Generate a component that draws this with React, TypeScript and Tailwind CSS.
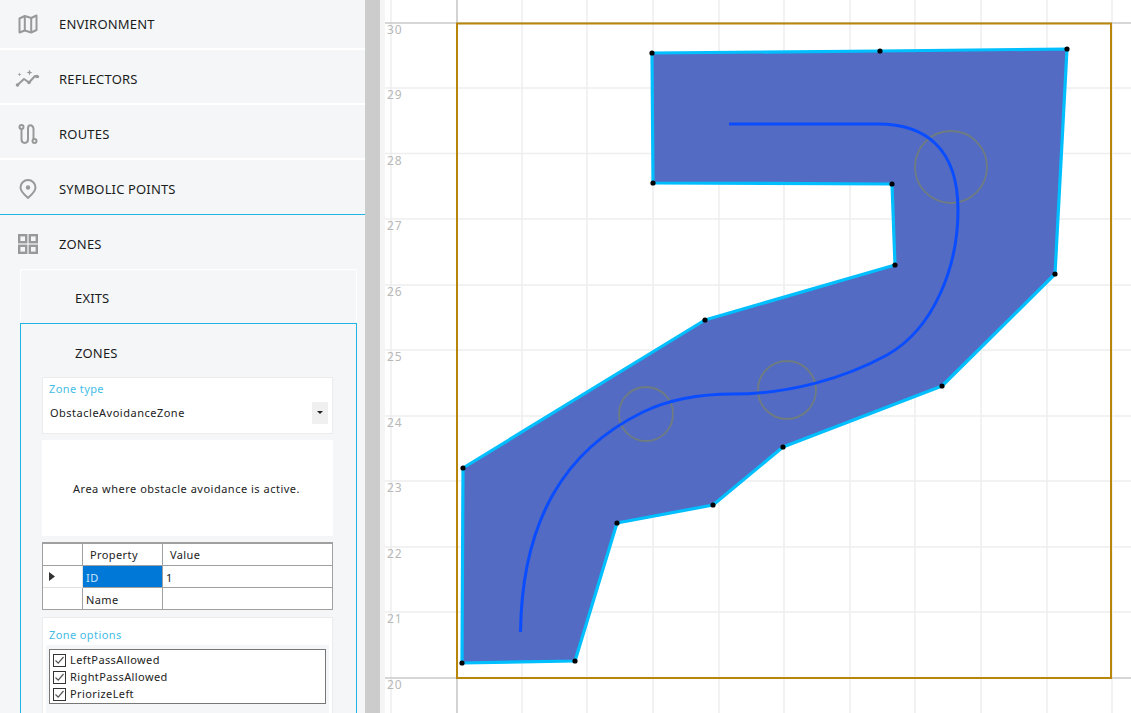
const F = "font-['Noto_Sans','Open_Sans',sans-serif]";

function MapIcon() {
  return (
    <svg width="20" height="20" viewBox="0 0 20 20" fill="none" stroke="#999" strokeWidth="2" strokeLinejoin="round">
      <path d="M1.5 4.5 L6.8 2 L13.2 4 L18.5 1.5 V16 L13.2 18.5 L6.8 16.5 L1.5 18.5 Z" />
      <path d="M6.8 2 V16.5 M13.2 4 V18.5" />
    </svg>
  );
}
function ReflectIcon() {
  return (
    <svg width="26" height="20" viewBox="0 0 26 20" fill="none">
      <path d="M2.5 16 L9 10 L14 13.5 L20 7 L24 8" stroke="#999" strokeWidth="2" strokeLinejoin="round" />
      <circle cx="2.5" cy="16" r="1.8" fill="#999" />
      <circle cx="14" cy="13.5" r="1.8" fill="#999" />
      <circle cx="22" cy="7.5" r="1.8" fill="#999" />
      <path d="M14.5 0.5 L15.3 2.7 L17.5 3.5 L15.3 4.3 L14.5 6.5 L13.7 4.3 L11.5 3.5 L13.7 2.7 Z" fill="#999" />
      <path d="M4.5 3.5 L5 5 L6.5 5.5 L5 6 L4.5 7.5 L4 6 L2.5 5.5 L4 5 Z" fill="#999" />
    </svg>
  );
}
function RouteIcon() {
  return (
    <svg width="20" height="20" viewBox="0 0 20 20" fill="none" stroke="#999" strokeWidth="2">
      <circle cx="3.5" cy="3" r="2" />
      <circle cx="16.5" cy="17" r="2" />
      <path d="M3.5 5 V15.5 C3.5 20 10 20 10 15.5 V4.5 C10 0 14.5 0 15.5 4.5 V15" strokeLinecap="round" />
    </svg>
  );
}
function PinIcon() {
  return (
    <svg width="18" height="21" viewBox="0 0 18 21" fill="none">
      <path d="M9 19 C5 15.5 1.5 12.5 1.5 8.5 A7.5 7.5 0 0 1 16.5 8.5 C16.5 12.5 13 15.5 9 19 Z" stroke="#999" strokeWidth="2" strokeLinejoin="round" />
      <circle cx="9" cy="8.5" r="2.2" fill="#999" />
    </svg>
  );
}
function GridIcon() {
  return (
    <svg width="20" height="20" viewBox="0 0 20 20" fill="none" stroke="#999" strokeWidth="2.4">
      <rect x="1.2" y="1.2" width="7" height="7" />
      <rect x="11.8" y="1.2" width="7" height="7" />
      <rect x="1.2" y="11.8" width="7" height="7" />
      <rect x="11.8" y="11.8" width="7" height="7" />
    </svg>
  );
}

function NavRow({ icon, label }: { icon: React.ReactNode; label: string }) {
  return (
    <div className="flex h-[50px] shrink-0 items-center border-b-[2px] border-white">
      <div className="flex w-[59px] justify-center pr-[3px]">{icon}</div>
      <span className="pt-[2px] text-[13px] tracking-[0.2px] text-[#1c1c1c]">{label}</span>
    </div>
  );
}

function Check({ label }: { label: string }) {
  return (
    <div className="flex h-[17px] items-center">
      <div className="ml-[3px] flex h-[13px] w-[13px] items-center justify-center border border-[#333] bg-white">
        <svg width="11" height="11" viewBox="0 0 11 11" fill="none" stroke="#555" strokeWidth="1.2">
          <path d="M1.5 5.5 L4.2 8.2 L9.5 2" />
        </svg>
      </div>
      <span className="ml-[4px] text-[11px] tracking-[0.4px] text-[#222]">{label}</span>
    </div>
  );
}

const poly = "652,53 880,51 1067,49 1055,274 942,386 783,447 713,505 617,523 575,661 462,663 463,468 705,320 895,265 892,184 653,183";
const dots = poly.split(" ").map((p) => p.split(",").map(Number));
const vx = [391, 457, 522, 587, 653, 719, 784, 850, 915, 981, 1047, 1112];
const hy = [23, 88, 153.5, 219, 285, 350, 416, 481, 547, 612, 678];

function Chart() {
  const ox = 365;
  return (
    <svg className="block" width={1131 - ox} height="713" viewBox={`${ox} 0 ${1131 - ox} 713`}>
      <rect x="365" y="0" width="15" height="713" fill="#cccccc" />
      <rect x="380" y="0" width="5" height="713" fill="#f5f5f5" />
      {vx.map((x) => (
        <line key={x} x1={x} x2={x} y1="0" y2="713" stroke={x === 457 ? "#c4c4c4" : "#eeeeee"} strokeWidth="1.5" />
      ))}
      {hy.map((y) => (
        <line key={y} x1="385" x2="1131" y1={y} y2={y} stroke={y === 23 || y === 678 ? "#c8c8c8" : "#eeeeee"} strokeWidth="1.5" />
      ))}
      {hy.map((y, i) => (
        <text key={y} x="387" y={y + 11} fontSize="12" letterSpacing="1" fill="#b8b8b8" fontFamily="Noto Sans, sans-serif">
          {30 - i}
        </text>
      ))}
      <rect x="457" y="23.5" width="654" height="654.5" fill="none" stroke="#b8860b" strokeWidth="2" />
      <polygon points={poly} fill="#536bc2" stroke="#00bfff" strokeWidth="3.2" strokeLinejoin="round" />
      <g fill="none" stroke="#6f7c80" strokeWidth="1.8">
        <circle cx="951" cy="167" r="36" />
        <circle cx="787" cy="390" r="29" />
        <circle cx="646" cy="414" r="27" />
      </g>
      <path
        d="M520.5 632 C522 520 565 450 643 412 C670 399 700 394 733 394 C790 394 845 378 887 355 C935 328 958 265 958 210 C958 148 925 124 878 124 L729 124"
        fill="none"
        stroke="#0a4cff"
        strokeWidth="3"
      />
      {dots.map(([x, y]) => (
        <circle key={`${x}-${y}`} cx={x} cy={y} r="2.6" fill="#000" />
      ))}
    </svg>
  );
}

export default function App() {
  return (
    <div className={`flex h-[713px] w-[1131px] overflow-hidden bg-white ${F}`}>
      <aside className="flex h-full w-[365px] shrink-0 flex-col overflow-hidden bg-[#f4f6f8]">
        <NavRow icon={<MapIcon />} label="ENVIRONMENT" />
        <div className="h-[5px] shrink-0" />
        <NavRow icon={<ReflectIcon />} label="REFLECTORS" />
        <div className="h-[5px] shrink-0" />
        <NavRow icon={<RouteIcon />} label="ROUTES" />
        <div className="h-[5px] shrink-0" />
        <div className="flex h-[50px] shrink-0 items-center border-b border-[#1fb5e0]">
          <div className="flex w-[59px] justify-center pr-[3px]"><PinIcon /></div>
          <span className="text-[13px] tracking-[0.15px] text-[#1c1c1c]">SYMBOLIC POINTS</span>
        </div>
        <div className="flex h-[54px] shrink-0 items-center pt-[4px]">
          <div className="flex w-[59px] justify-center pr-[3px]"><GridIcon /></div>
          <span className="pt-[2px] text-[13px] tracking-[0.2px] text-[#1c1c1c]">ZONES</span>
        </div>
        <div className="ml-[20px] flex h-[54px] w-[337px] shrink-0 items-center border border-b-0 border-white pl-[54px] pt-[4px]">
          <span className="text-[13px] tracking-[0.15px] text-[#1c1c1c]">EXITS</span>
        </div>
        <div className="ml-[20px] w-[337px] shrink-0 border border-[#1fb5e0] pl-[21px] pr-[23px]">
          <div className="flex h-[53px] items-center pl-[33px] pt-[7px]">
            <span className="text-[13px] tracking-[0.2px] text-[#1c1c1c]">ZONES</span>
          </div>
          <div className="flex h-[57px] flex-col border border-[#ececec] bg-white pl-[6px]">
            <span className="mt-[3px] text-[11px] tracking-[0.4px] text-[#45bde6]">Zone type</span>
            <div className="mt-[6px] flex items-center justify-between pr-[4px]">
              <span className="pl-[1px] text-[11px] tracking-[0.5px] text-[#222]">ObstacleAvoidanceZone</span>
              <span className="mt-[-2px] flex h-[22px] w-[16px] items-center justify-center bg-[#f0f0f0]">
                <svg width="6" height="3" viewBox="0 0 6 3"><path d="M0 0 H6 L3 3 Z" fill="#222" /></svg>
              </span>
            </div>
          </div>
          <div className="mt-[6px] flex h-[96px] items-center justify-center bg-white pt-[2px] pr-[2px]">
            <span className="text-[11px] tracking-[0.5px] text-[#222]">Area where obstacle avoidance is active.</span>
          </div>
          <div className="mt-[6px] grid h-[68px] grid-cols-[40px_80px_1fr] grid-rows-[22px_22px_21px] border-t-2 border-r border-b border-l border-[#a0a0a0] bg-white text-[11px] tracking-[0.4px] text-[#222]">
            <div className="border-r border-b border-[#a0a0a0]" />
            <div className="flex items-center border-r border-b border-[#a0a0a0] pl-[7px] pt-[2px]">Property</div>
            <div className="flex items-center border-b border-[#a0a0a0] pl-[7px] pt-[2px]">Value</div>
            <div className="flex items-center border-r border-b border-[#e0e0e0] pl-[6px]">
              <svg width="6" height="9" viewBox="0 0 6 9"><path d="M0 0 L6 4.5 L0 9 Z" fill="#333" /></svg>
            </div>
            <div className="flex items-center border-r border-b border-[#a0a0a0] bg-[#0078d7] pl-[3px] pt-[3px] text-[#cfe6f8]">ID</div>
            <div className="flex items-center border-b border-[#a0a0a0] pl-[3px] pt-[3px]">1</div>
            <div className="border-r border-[#a0a0a0]" />
            <div className="flex items-center border-r border-[#a0a0a0] pl-[3px] pt-[3px]">Name</div>
            <div />
          </div>
          <div className="mt-[7px] h-[120px] border border-[#ececec] bg-white px-[3px]">
            <div className="ml-[3px] mt-[9px] text-[11px] tracking-[0.4px] text-[#45bde6]">Zone options</div>
            <div className="mt-[1px] h-[80px] bg-[#f4f6f8] px-[3px] pt-[4px]">
              <div className="h-[55px] border border-[#777] bg-white pt-[2px]">
                <Check label="LeftPassAllowed" />
                <Check label="RightPassAllowed" />
                <Check label="PriorizeLeft" />
              </div>
            </div>
          </div>
        </div>
      </aside>
      <main className="min-w-0 flex-1">
        <Chart />
      </main>
    </div>
  );
}
